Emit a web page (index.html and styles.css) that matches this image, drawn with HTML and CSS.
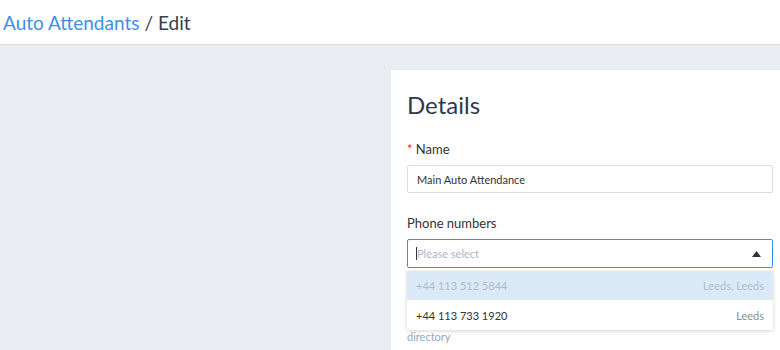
FILE: index.html
```html
<!DOCTYPE html>
<html lang="en">
<head>
    <meta charset="UTF-8">
    <title>Auto Attendants / Edit</title>
    <link rel="stylesheet" href="styles.css">
</head>
<body>
    <header class="topbar">
        <a class="crumb-link" href="#">Auto Attendants</a>
        <span class="crumb-sep">/</span>
        <span class="crumb-current">Edit</span>
    </header>

    <main class="page">
        <div class="spacer"></div>
        <section class="card">
            <h2 class="card-title">Details</h2>

            <div class="field">
                <label class="field-label"><span class="required">*</span> Name</label>
                <input class="text-input" type="text" value="Main Auto Attendance">
            </div>

            <div class="field">
                <label class="field-label">Phone numbers</label>
                <div class="select-wrap">
                    <div class="select open">
                        <span class="caret"></span>
                        <span class="placeholder">Please select</span>
                        <svg class="arrow" width="9" height="6" viewBox="0 0 9 6"><path d="M4.5 0 L9 6 L0 6 Z" fill="#333"/></svg>
                    </div>
                    <ul class="dropdown">
                        <li class="option active"><span>+44 113 512 5844</span><span class="option-meta">Leeds, Leeds</span></li>
                        <li class="option"><span>+44 113 733 1920</span><span class="option-meta">Leeds</span></li>
                    </ul>
                </div>
                <div class="hint">directory</div>
            </div>
        </section>
    </main>
</body>
</html>
```

FILE: styles.css
```css
body {
    margin: 0;
    font-family: Lato, "Noto Sans", sans-serif;
    background-color: #eaeef2;
    color: #333;
    overflow: hidden;
    height: 350px;
}
.topbar {
    height: 45px;
    background-color: #fff;
    border-bottom: 1px solid #d9dee5;
    display: flex;
    align-items: center;
    gap: 5px;
    padding-left: 3px;
    font-size: 19px;
    box-sizing: border-box;
}
.crumb-link {
    color: #3f8fe6;
    text-decoration: none;
}
.crumb-sep,
.crumb-current {
    color: #34404d;
}
.page {
    display: grid;
    grid-template-columns: 391px 398px;
    padding-top: 25px;
}
.card {
    background-color: #fff;
    padding: 20px 16px 0 16px;
    height: 260px;
}
.card-title {
    margin: 0 0 22px 0;
    font-size: 24px;
    font-weight: 400;
    color: #2c3a4b;
}
.field {
    margin-bottom: 22px;
}
.field-label {
    display: block;
    font-size: 13px;
    color: #333;
    margin-bottom: 8px;
}
.required {
    color: #f5222d;
}
.text-input {
    width: 100%;
    height: 28px;
    box-sizing: border-box;
    border: 1px solid #d8dde6;
    border-radius: 2px;
    padding: 0 9px;
    font-family: inherit;
    font-size: 11px;
    color: #333;
    outline: none;
}
.select-wrap {
    position: relative;
}
.select {
    height: 29px;
    box-sizing: border-box;
    border: 1px solid #3d8fe0;
    border-radius: 2px;
    display: flex;
    align-items: center;
    padding: 0 11px 0 8px;
    font-size: 11px;
}
.caret {
    width: 1px;
    height: 13px;
    background-color: #333;
}
.placeholder {
    flex: 1;
    color: #aab7c8;
}
.arrow {
    display: block;
}
.dropdown {
    position: absolute;
    left: 0;
    right: 0;
    top: 32px;
    margin: 0;
    padding: 0;
    list-style: none;
    background-color: #fff;
    box-shadow: 0 1px 4px rgba(0, 0, 0, 0.18);
    z-index: 2;
    font-size: 11px;
}
.option {
    height: 30px;
    display: flex;
    align-items: center;
    justify-content: space-between;
    padding: 0 9px;
    color: #333;
}
.option-meta {
    color: #8a8f96;
}
.option.active {
    height: 29px;
    background-color: #dceaf8;
    color: #b1bcc8;
}
.option.active .option-meta {
    color: #b1bcc8;
}
.hint {
    margin-top: 62px;
    font-size: 11px;
    color: #8fa7c4;
}
```
